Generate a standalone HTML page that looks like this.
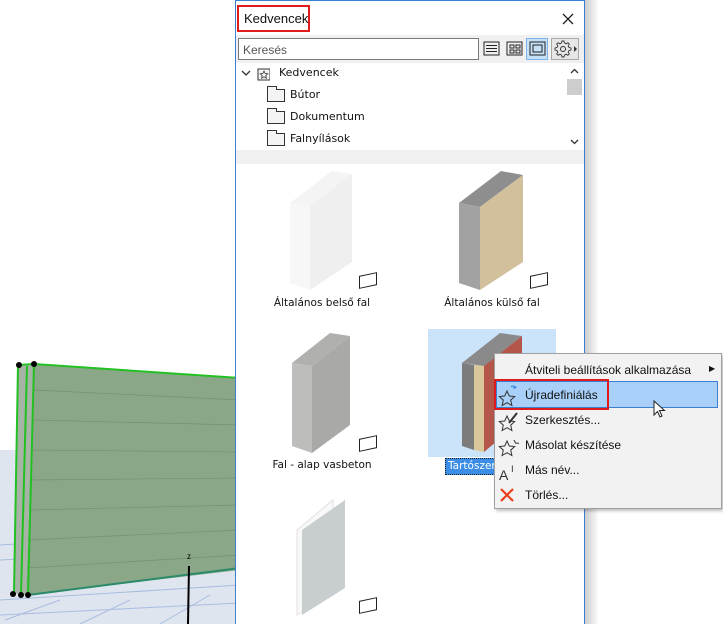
<!DOCTYPE html>
<html><head><meta charset="utf-8"><style>
*{margin:0;padding:0;box-sizing:border-box}
body{width:723px;height:624px;overflow:hidden;background:#fff;position:relative;font-family:"DejaVu Sans","Liberation Sans",sans-serif;font-size:11px;color:#111}
.a{position:absolute}
.lbl{position:absolute;font-size:10.5px;white-space:nowrap;transform:translateX(-50%)}
.mi{position:absolute;left:525px;font-family:"Liberation Sans",sans-serif;font-size:12px}
.fold{position:absolute;width:18px;height:13px;border:1px solid #333;background:#f4f4f4}
.fold:before{content:"";position:absolute;left:-1px;top:-4px;width:8px;height:3px;border:1px solid #333;border-bottom:none;background:#f4f4f4}
.tag{position:absolute;width:18px;height:13px;border:1px solid #222;background:#fff;transform:skewY(-12deg)}
</style></head><body>
<!-- 3D view -->
<div class="a" style="left:0;top:450px;width:240px;height:174px;background:#dfe5ee"></div>
<svg class="a" style="left:0;top:0" width="240" height="624">
<g stroke="#a9bce0" stroke-width="1">
<line x1="0" y1="545" x2="240" y2="530"/><line x1="0" y1="560" x2="240" y2="548"/><line x1="0" y1="600" x2="240" y2="585"/><line x1="0" y1="615" x2="240" y2="603"/>
<line x1="5" y1="620" x2="60" y2="600"/><line x1="80" y1="624" x2="130" y2="600"/><line x1="160" y1="624" x2="210" y2="595"/></g>
<polygon points="34,364 240,378 240,570 26,595" fill="#8aa888"/>
<polygon points="18,365 34,364 26,595 14,593" fill="#a7b3a5"/>
<g stroke="#6a8768" stroke-width="0.7" opacity="0.7">
<line x1="34" y1="390" x2="240" y2="400"/><line x1="33" y1="420" x2="240" y2="425"/><line x1="32" y1="450" x2="240" y2="452"/><line x1="30" y1="480" x2="240" y2="478"/><line x1="29" y1="510" x2="240" y2="505"/><line x1="28" y1="540" x2="240" y2="530"/><line x1="27" y1="568" x2="240" y2="555"/></g>
<polyline points="18,365 34,364 240,378" fill="none" stroke="#22c022" stroke-width="2"/>
<line x1="18" y1="365" x2="14" y2="593" stroke="#22c022" stroke-width="2"/>
<line x1="27" y1="366" x2="21" y2="594" stroke="#22c022" stroke-width="2"/>
<line x1="34" y1="364" x2="28" y2="595" stroke="#22c022" stroke-width="2"/>
<line x1="28" y1="595" x2="240" y2="568" stroke="#2a8a6a" stroke-width="2"/>
<g fill="#000"><circle cx="19" cy="365" r="3"/><circle cx="34" cy="364" r="3"/><circle cx="13" cy="594" r="3"/><circle cx="21" cy="595" r="3"/><circle cx="28" cy="595" r="3"/></g>
<line x1="189" y1="566" x2="188" y2="624" stroke="#000" stroke-width="2"/>
<text x="187" y="559" font-size="8" font-family="Liberation Sans">z</text>
</svg>
<!-- panel shadow -->
<div class="a" style="left:585px;top:0;width:14px;height:624px;background:linear-gradient(90deg,#ccc,#fff)"></div>
<!-- panel -->
<div class="a" style="left:235px;top:0;width:350px;height:624px;background:#fff;border-left:1px solid #3c7fd0;border-right:1px solid #3c7fd0;border-top:1px solid #3c7fd0"></div>
<div class="a" style="left:236px;top:35px;width:348px;height:28px;background:#f0f0f0"></div>
<div class="a" style="left:237px;top:5px;width:73px;height:27px;border:2px solid #e01b1b"></div>
<div class="a" style="left:244px;top:11px;font-size:13px;font-family:'Liberation Sans',sans-serif">Kedvencek</div>
<svg class="a" style="left:562px;top:13px" width="12" height="12"><path d="M1 1L11 11M11 1L1 11" stroke="#222" stroke-width="1.3"/></svg>
<div class="a" style="left:238px;top:38px;width:241px;height:22px;border:1px solid #7a7a7a;background:#fff;padding:4px 4px;color:#555;font-size:12px;font-family:'Liberation Sans',sans-serif">Keresés</div>
<svg class="a" style="left:482px;top:38px" width="100" height="22">
<rect x="2" y="4" width="15" height="13" fill="none" stroke="#222"/><path d="M4 7.5h11M4 10.5h11M4 13.5h11" stroke="#222"/>
<rect x="25" y="4" width="15" height="13" fill="none" stroke="#222"/><rect x="28" y="7" width="4" height="3" fill="none" stroke="#222"/><rect x="34" y="7" width="4" height="3" fill="none" stroke="#222"/><rect x="28" y="12" width="4" height="3" fill="none" stroke="#222"/><rect x="34" y="12" width="4" height="3" fill="none" stroke="#222"/>
<rect x="44.5" y="0.5" width="21" height="21" fill="#c6e0f8" stroke="#7eb4ea"/><rect x="48" y="4" width="15" height="13" fill="none" stroke="#222"/><rect x="51" y="7" width="9" height="7" fill="none" stroke="#222"/>
<rect x="69.5" y="0.5" width="27" height="21" fill="#e6e6e6" stroke="#aaa"/>
<path d="M80 3h2l.5 2 1.6.8 1.8-1.1 1.4 1.4-1.1 1.8.8 1.6 2 .5v2l-2 .5-.8 1.6 1.1 1.8-1.4 1.4-1.8-1.1-1.6.8-.5 2h-2l-.5-2-1.6-.8-1.8 1.1-1.4-1.4 1.1-1.8-.8-1.6-2-.5v-2l2-.5.8-1.6-1.1-1.8 1.4-1.4 1.8 1.1 1.6-.8z" fill="none" stroke="#333" stroke-width=".9"/>
<circle cx="81" cy="11" r="2.5" fill="none" stroke="#333"/><path d="M92 8l3 3-3 3z" fill="#333"/>
</svg>
<!-- tree -->
<svg class="a" style="left:240px;top:66px" width="30" height="16"><path d="M2 5l4 4 4-4" fill="none" stroke="#333" stroke-width="1.3"/><rect x="18" y="3" width="12" height="11" fill="#f4f4f4" stroke="#333"/><path d="M24 5l1.2 2.5 2.6.3-2 1.8.6 2.6-2.4-1.4-2.4 1.4.6-2.6-2-1.8 2.6-.3z" fill="none" stroke="#333" stroke-width=".8"/></svg>
<div class="a" style="left:279px;top:66px">Kedvencek</div>
<div class="fold" style="left:267px;top:89px"></div><div class="a" style="left:290px;top:88px">Bútor</div>
<div class="fold" style="left:267px;top:111px"></div><div class="a" style="left:290px;top:110px">Dokumentum</div>
<div class="fold" style="left:267px;top:133px"></div><div class="a" style="left:290px;top:132px">Falnyílások</div>
<div class="a" style="left:567px;top:79px;width:15px;height:16px;background:#cdcdcd"></div>
<svg class="a" style="left:567px;top:64px" width="15" height="84"><path d="M4 9l3.5-3.5L11 9M4 76l3.5 3.5L11 76" fill="none" stroke="#333" stroke-width="1.3"/></svg>
<div class="a" style="left:236px;top:150px;width:348px;height:14px;background:#f0f0f0"></div>
<!-- items -->
<svg class="a" style="left:0;top:0" width="585" height="624">
<!-- item1 -->
<polygon points="290,203 332,171 352,174 310,206" fill="#f4f4f4"/>
<polygon points="290,203 310,206 310,290 290,283" fill="#f7f7f7"/>
<polygon points="310,206 352,174 352,262 310,290" fill="#efefef"/>
<!-- item2 -->
<polygon points="459,203 501,171 523,175 480,207" fill="#8e8e8e"/>
<polygon points="459,203 480,207 480,290 459,283" fill="#a2a2a2"/>
<polygon points="480,207 523,175 523,262 480,290" fill="#d2c09c"/>
<!-- selected bg -->
<rect x="428" y="329" width="128" height="128" fill="#cce4fa"/>
<!-- item3 concrete -->
<polygon points="292,363 330,333 350,336 312,366" fill="#b0b0ae"/>
<polygon points="292,363 312,366 312,453 292,446" fill="#bdbdbb"/>
<polygon points="312,366 350,336 350,425 312,453" fill="#a9a9a7"/>
<!-- item4 composite -->
<polygon points="462,363 500,333 522,336 484,366" fill="#8a8a8a"/>
<polygon points="462,363 474,365 474,450 462,446" fill="#7c7c7c"/>
<polygon points="474,365 484,366 484,452 474,450" fill="#dac89c"/>
<polygon points="484,366 522,336 522,420 484,452" fill="#b5564a"/>
<!-- item5 drywall -->
<polygon points="297,530 333,500 333,590 297,615" fill="#f8f8f8" stroke="#e2e2e2"/>
<polygon points="302,530 345,500 345,588 302,615" fill="#c8cecf"/>
</svg>
<div class="tag" style="left:359px;top:274px"></div><div class="tag" style="left:530px;top:274px"></div><div class="tag" style="left:359px;top:437px"></div><div class="tag" style="left:359px;top:599px"></div>
<div class="lbl" style="left:322px;top:297px">Általános belső fal</div>
<div class="lbl" style="left:492px;top:297px">Általános külső fal</div>
<div class="lbl" style="left:322px;top:459px">Fal - alap vasbeton</div>
<div class="a" style="left:445px;top:458px;width:50px;height:17px;background:#3b8de6;color:#fff;font-size:10.5px;padding:1px 0 0 2px;border:1px dotted #222;overflow:hidden;white-space:nowrap">Tartószerk</div>
<!-- context menu -->
<div class="a" style="left:494px;top:353px;width:228px;height:156px;background:#f2f2f2;border:1px solid #a0a0a0;box-shadow:2px 2px 3px rgba(0,0,0,.25)"></div>
<div class="a" style="left:496px;top:381px;width:222px;height:27px;background:#a8d0f8;border:1px solid #3a7fd0"></div>
<div class="a" style="left:494px;top:379px;width:115px;height:31px;border:2px solid #e01b1b"></div>
<div class="mi" style="top:363px">Átviteli beállítások alkalmazása</div>
<div class="a" style="left:709px;top:364px;font-size:8px">▶</div>
<div class="mi" style="top:388px">Újradefiniálás</div>
<div class="mi" style="top:413px">Szerkesztés...</div>
<div class="mi" style="top:438px">Másolat készítése</div>
<div class="mi" style="top:463px">Más név...</div>
<div class="mi" style="top:488px">Törlés...</div>
<svg class="a" style="left:497px;top:383px" width="26" height="122">
<g fill="none" stroke="#333" stroke-width="1"><path d="M10 8l2.3 5 5.4.5-4 3.6 1.2 5.4-4.9-2.8-4.9 2.8 1.2-5.4-4-3.6 5.4-.5z"/>
<path d="M10 33l2.3 5 5.4.5-4 3.6 1.2 5.4-4.9-2.8-4.9 2.8 1.2-5.4-4-3.6 5.4-.5z"/><path d="M12 40l8-10" stroke-width="2"/>
<path d="M10 58l2.3 5 5.4.5-4 3.6 1.2 5.4-4.9-2.8-4.9 2.8 1.2-5.4-4-3.6 5.4-.5z"/><path d="M17 57l1.5 3 3.5.4" /></g>
<path d="M14 4a3 3 0 0 1 5 1M18 3v2h-2" stroke="#2a7ae0" fill="none"/>
<text x="2" y="97" font-size="14" font-family="Liberation Sans" fill="#333">A</text><text x="14" y="89" font-size="9" fill="#333">I</text>
<path d="M4 106l12 12M16 106l-12 12" stroke="#e8401c" stroke-width="2.2"/>
</svg>
<svg class="a" style="left:653px;top:400px" width="14" height="20"><path d="M1 1v14l3.5-3.5 2.5 5.5 2-1-2.5-5.5h5z" fill="#fff" stroke="#222"/></svg>
</body></html>
